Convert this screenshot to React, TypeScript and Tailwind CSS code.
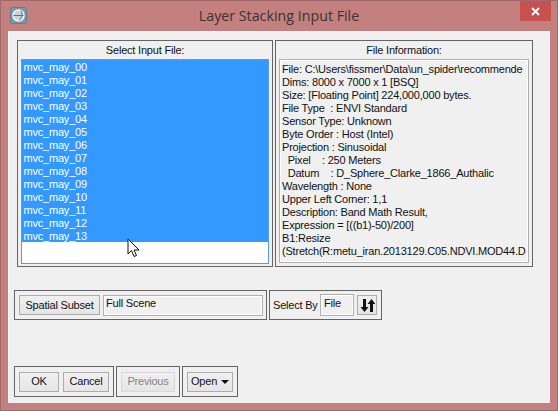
const files = ['00', '01', '02', '03', '04', '05', '06', '07', '08', '09', '10', '11', '12', '13'];

const info = [
  'File: C:\\Users\\fissmer\\Data\\un_spider\\recommende',
  'Dims: 8000 x 7000 x 1 [BSQ]',
  'Size: [Floating Point] 224,000,000 bytes.',
  'File Type  : ENVI Standard',
  'Sensor Type: Unknown',
  'Byte Order : Host (Intel)',
  'Projection : Sinusoidal',
  '  Pixel    : 250 Meters',
  '  Datum    : D_Sphere_Clarke_1866_Authalic',
  'Wavelength : None',
  'Upper Left Corner: 1,1',
  'Description: Band Math Result,',
  'Expression = [((b1)-50)/200]',
  'B1:Resize',
  '(Stretch(R:metu_iran.2013129.C05.NDVI.MOD44.D',
];

function Button({ className, disabled, children }: { className: string; disabled?: boolean; children: React.ReactNode }) {
  return (
    <button
      className={`h-5 flex items-center justify-center border bg-linear-to-b from-[#f0f0f0] to-[#e5e5e5] ${
        disabled ? 'border-[#d9d9d9] text-[#838383]' : 'border-[#acacac] text-[#111]'
      } ${className}`}
    >
      {children}
    </button>
  );
}

function Field({ className, children }: { className: string; children: React.ReactNode }) {
  return (
    <div className={`border border-[#b0b0b0] outline outline-1 -outline-offset-2 outline-white px-[2px] leading-[13px] ${className}`}>
      {children}
    </div>
  );
}

export default function App() {
  return (
    <div className="relative w-[558px] h-[411px] bg-[#c4807e] border border-[#a06a6a] flex flex-col overflow-hidden text-[11px] tracking-[-0.2px] text-[#111] font-['Liberation_Sans',sans-serif]">
      <div className="relative h-[30px] shrink-0 flex items-center justify-center">
        <svg className="absolute left-[9px] top-[6px]" width="17" height="17" viewBox="0 0 17 17">
          <rect x="0.5" y="0.5" width="16" height="16" rx="2" fill="#7f98a6" stroke="#5f7f92" />
          <circle cx="8.5" cy="8.5" r="5.5" fill="#c9d3d8" stroke="#f2f4f5" strokeWidth="1.5" />
          <path d="M3.5 8.5h10M11 3.5c2 3 1 7-1.5 10" fill="none" stroke="#5d7483" strokeWidth="1" />
        </svg>
        <span className="text-[14.25px] tracking-normal text-[#3a3333] font-['Open_Sans'] -mt-[1px]">Layer Stacking Input File</span>
        <div className="absolute left-[519px] top-0 w-[31px] h-5 bg-[#c75050] flex items-center justify-center">
          <svg width="9" height="9" viewBox="0 0 9 9">
            <path d="M1 1l7 7M8 1l-7 7" stroke="#fff" strokeWidth="2" />
          </svg>
        </div>
      </div>

      <div className="flex-1 mx-[7px] mb-[7px] bg-[#f0f0f0] border-l border-t border-[#f8f8f8] flex flex-col">
        <div className="mt-[8px] ml-[8px] flex gap-[2px]">
          <div className="relative w-[256px] h-[227px] border border-[#646464] flex flex-col">
            <div className="h-[18px] text-center leading-[19px]">Select Input File:</div>
            <div className="mx-[3px] h-[205px] border border-[#569de5] bg-white">
              {files.map((n) => (
                <div key={n} className="h-[13px] bg-[#3399ff] text-white pl-[1.5px] leading-[15px]">
                  mvc_may_{n}
                </div>
              ))}
            </div>
            <svg className="absolute left-[109px] top-[197px]" width="13" height="20" viewBox="0 0 13 20">
              <path d="M1 1v15l3.5-3.5 2.5 6 2.5-1-2.5-5.5h5z" fill="#fff" stroke="#111" strokeWidth="1" />
            </svg>
          </div>

          <div className="w-[258px] h-[227px] border border-[#646464] flex flex-col">
            <div className="h-[18px] text-center leading-[19px]">File Information:</div>
            <div className="mx-[3px] w-[250px] h-[204px] border border-[#b0b0b0] outline outline-1 -outline-offset-2 outline-white px-[2px] pt-[3px] overflow-hidden whitespace-pre leading-[13px]">
              {info.map((line) => (
                <div key={line} className="h-[13px]">
                  {line}
                </div>
              ))}
            </div>
          </div>
        </div>

        <div className="mt-[23px] ml-[5px] flex gap-[2px]">
          <div className="w-[253px] h-[30px] border border-[#646464] flex items-center gap-[3px] pl-[4px]">
            <Button className="w-[81px]">Spatial Subset</Button>
            <Field className="w-[160px] h-[21px] mt-[1px] pt-[1px]">Full Scene</Field>
          </div>
          <div className="w-[113px] h-[30px] border border-[#646464] flex items-center pl-[3px]">
            <span className="w-[47px] whitespace-nowrap">Select By</span>
            <Field className="w-[34px] h-[22px] pl-[3px] pt-[2px]">File</Field>
            <Button className="w-[20px] ml-[3px]">
              <svg width="15" height="13" viewBox="0 0 15 13">
                <path d="M3 0h3v8h2.5l-4 5-4-5H3zM10 13V5H7.5l4-5 4 5H13v8z" fill="#111" />
              </svg>
            </Button>
          </div>
        </div>

        <div className="mt-[46px] ml-[5px] flex gap-[2px]">
          <div className="w-[100px] h-[31px] border border-[#646464] flex items-center gap-[4px] pl-[4px]">
            <Button className="w-[40px]">OK</Button>
            <Button className="w-[46px]">Cancel</Button>
          </div>
          <div className="w-[64px] h-[31px] border border-[#646464] flex items-center pl-[4px]">
            <Button disabled className="w-[54px]">Previous</Button>
          </div>
          <div className="w-[56px] h-[31px] border border-[#646464] flex items-center pl-[4px]">
            <Button className="w-[46px] gap-[4px]">
              Open
              <svg width="8" height="4" viewBox="0 0 8 4">
                <path d="M0 0h8L4 4z" fill="#111" />
              </svg>
            </Button>
          </div>
        </div>
      </div>
    </div>
  );
}
